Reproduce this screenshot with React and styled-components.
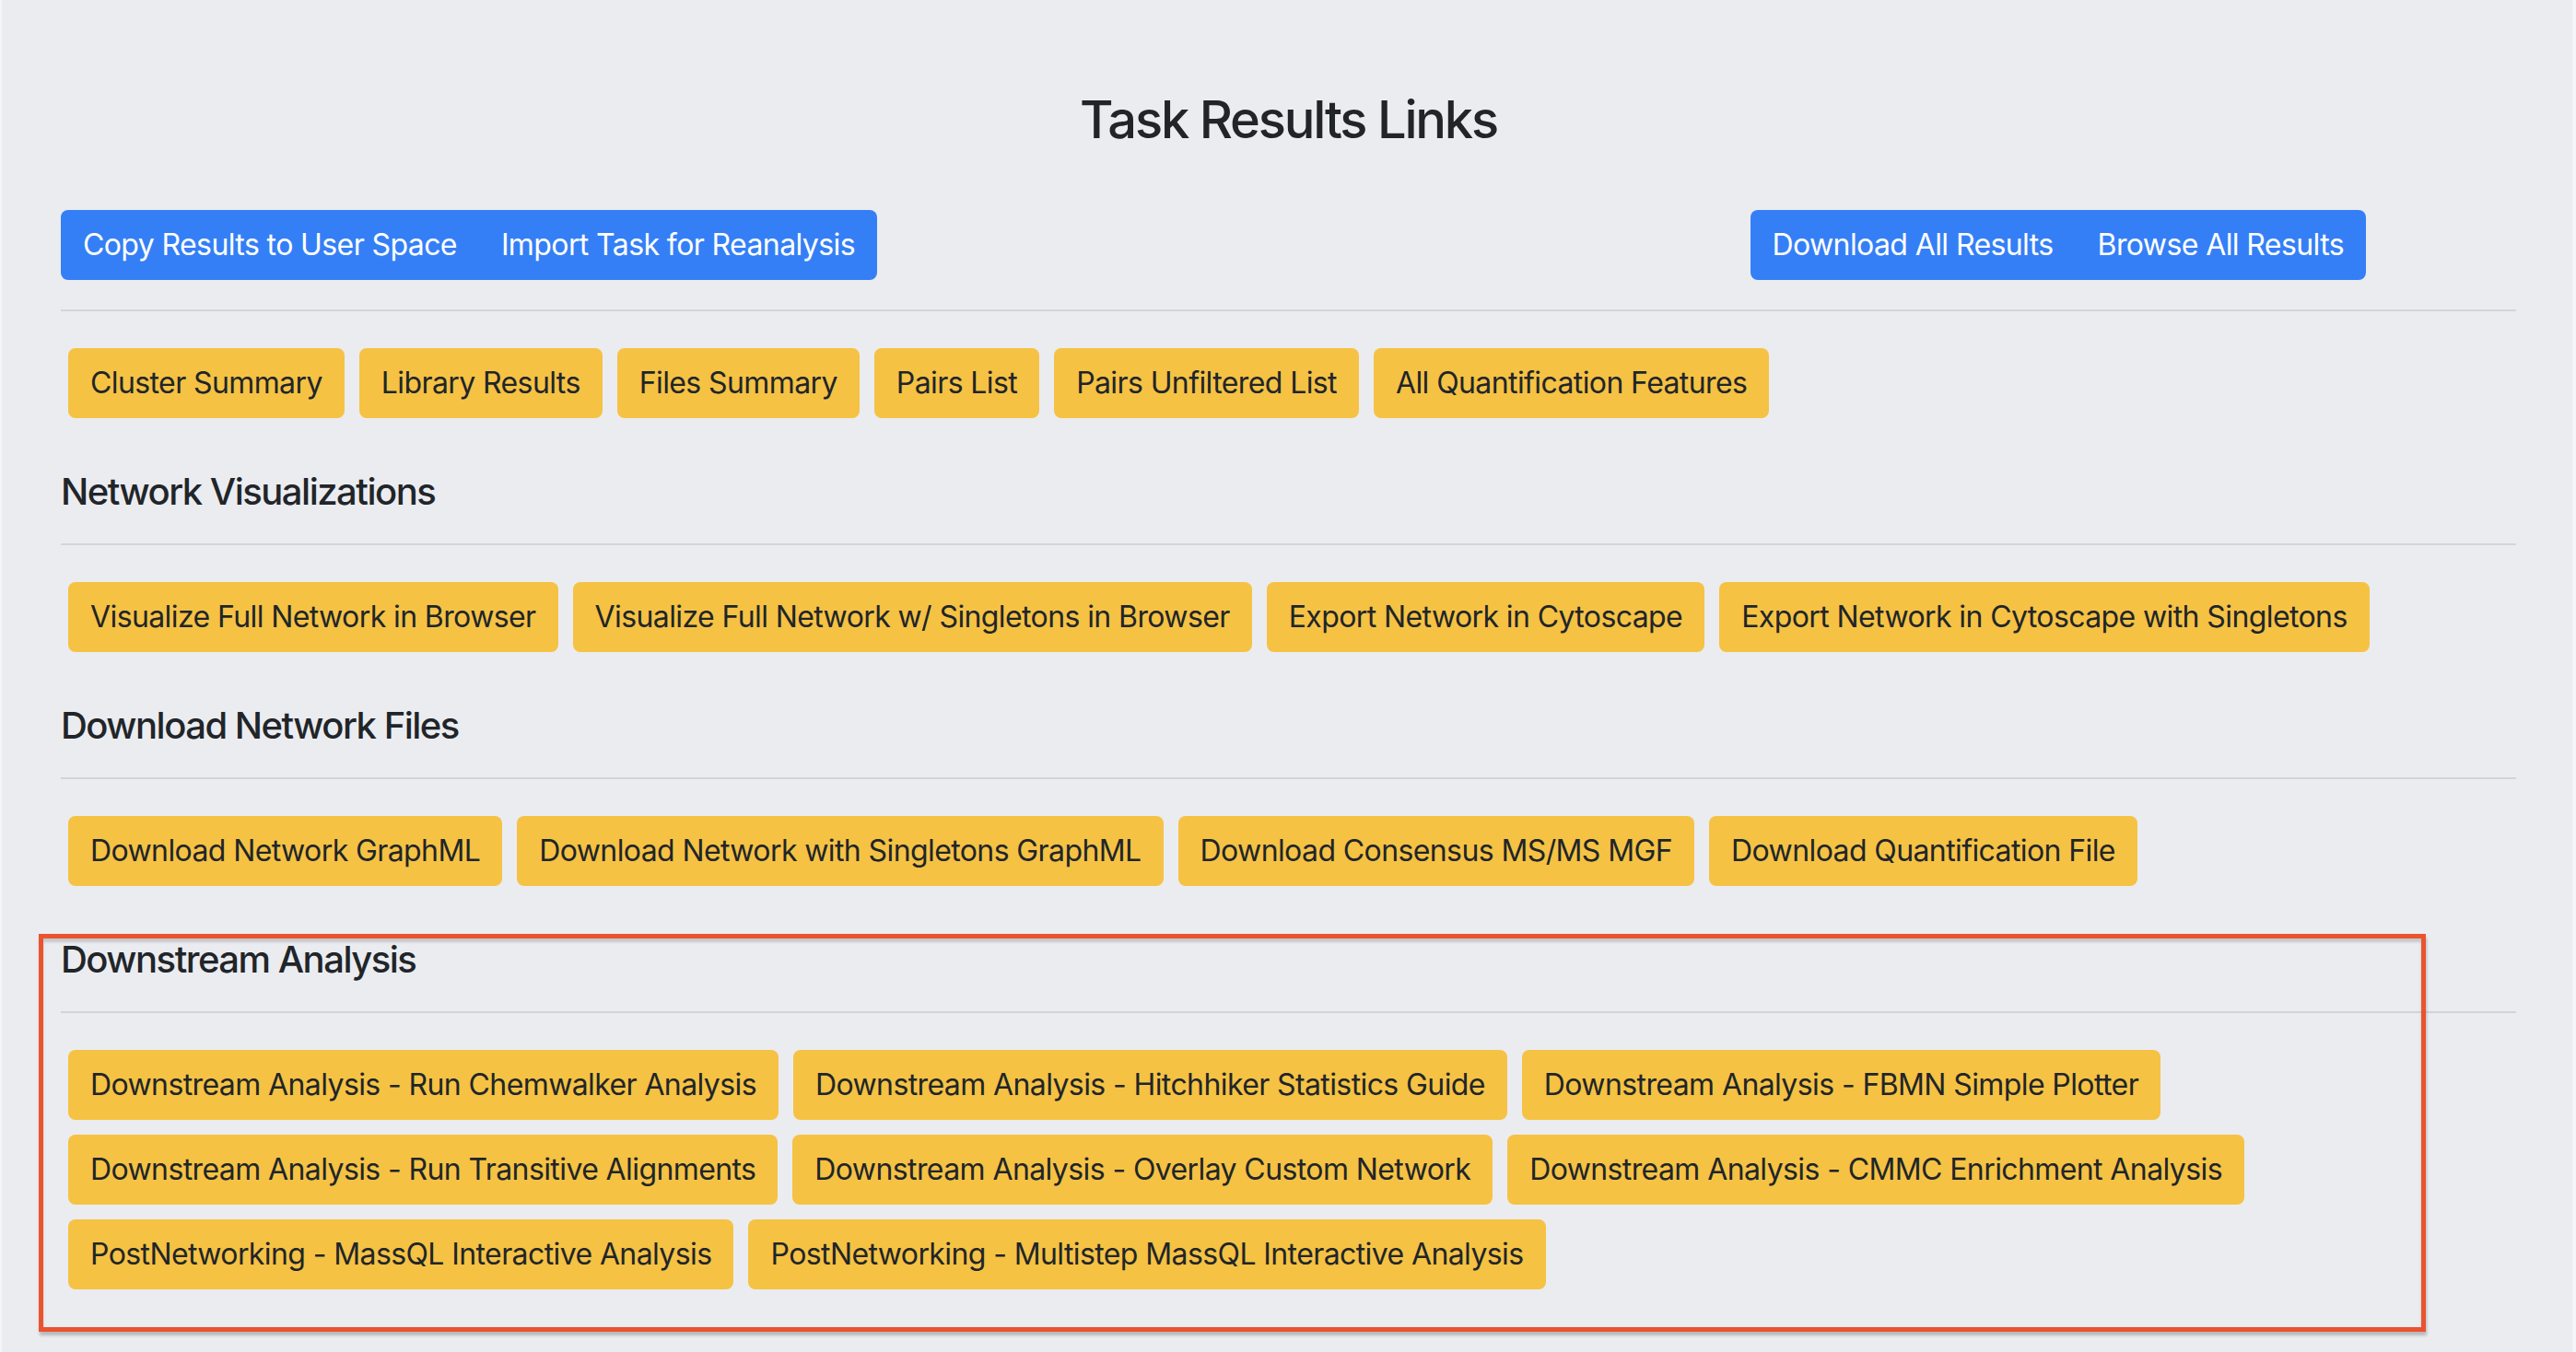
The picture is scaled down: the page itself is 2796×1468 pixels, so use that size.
import React from 'react'
import styled, { createGlobalStyle } from 'styled-components'

const GlobalStyle = createGlobalStyle`
  html, body {
    margin: 0;
    padding: 0;
    background: #f4f5f7;
  }
  body {
    font-family: Inter, "Noto Sans", "Liberation Sans", sans-serif;
    color: #212529;
  }
`

const quickLinks = [
  'Cluster Summary',
  'Library Results',
  'Files Summary',
  'Pairs List',
  'Pairs Unfiltered List',
  'All Quantification Features',
]

const sections = [
  {
    title: 'Network Visualizations',
    links: [
      'Visualize Full Network in Browser',
      'Visualize Full Network w/ Singletons in Browser',
      'Export Network in Cytoscape',
      'Export Network in Cytoscape with Singletons',
    ],
  },
  {
    title: 'Download Network Files',
    links: [
      'Download Network GraphML',
      'Download Network with Singletons GraphML',
      'Download Consensus MS/MS MGF',
      'Download Quantification File',
    ],
  },
  {
    title: 'Downstream Analysis',
    highlight: true,
    links: [
      'Downstream Analysis - Run Chemwalker Analysis',
      'Downstream Analysis - Hitchhiker Statistics Guide',
      'Downstream Analysis - FBMN Simple Plotter',
      'Downstream Analysis - Run Transitive Alignments',
      'Downstream Analysis - Overlay Custom Network',
      'Downstream Analysis - CMMC Enrichment Analysis',
      'PostNetworking - MassQL Interactive Analysis',
      'PostNetworking - Multistep MassQL Interactive Analysis',
    ],
  },
]

export default function App() {
  return (
    <>
      <GlobalStyle />
      <Page>
        <Title>Task Results Links</Title>
        <TopBar>
          <BtnGroup>
            <BlueButton>Copy Results to User Space</BlueButton>
            <BlueButton>Import Task for Reanalysis</BlueButton>
          </BtnGroup>
          <BtnGroup>
            <BlueButton>Download All Results</BlueButton>
            <BlueButton>Browse All Results</BlueButton>
          </BtnGroup>
        </TopBar>
        <Divider />
        <ButtonRow>
          {quickLinks.map((label) => (
            <YellowButton key={label}>{label}</YellowButton>
          ))}
        </ButtonRow>
        {sections.map((section) => (
          <Section key={section.title}>
            {section.highlight && <Highlight />}
            <SectionTitle>{section.title}</SectionTitle>
            <Divider />
            <ButtonRow>
              {section.links.map((label) => (
                <YellowButton key={label}>{label}</YellowButton>
              ))}
            </ButtonRow>
          </Section>
        ))}
      </Page>
    </>
  )
}

const Page = styled.div`
  background: #ebecf0;
  margin: 0 4px 0 2px;
  min-height: 1468px;
  box-sizing: border-box;
  padding: 97px 61px 0 64px;
`

const Title = styled.h3`
  margin: 0 0 64px;
  text-align: center;
  font-size: 56px;
  line-height: 1.2;
  font-weight: 500;
  letter-spacing: -2.2px;
  color: #212529;
`

const TopBar = styled.div`
  display: flex;
  justify-content: space-between;
  padding-right: 163px;
`

const BtnGroup = styled.div`
  display: inline-flex;
  border-radius: 8px;
  overflow: hidden;
`

const BaseButton = styled.button`
  font-family: inherit;
  font-size: 32px;
  line-height: 48px;
  font-weight: 400;
  letter-spacing: -0.6px;
  padding: 14px 24px;
  border: none;
  cursor: pointer;
  white-space: nowrap;
`

const BlueButton = styled(BaseButton)`
  background: #357ff6;
  color: #ffffff;
  border-radius: 0;
`

const YellowButton = styled(BaseButton)`
  background: #f5c244;
  color: #212529;
  border-radius: 8px;
  margin: 8px;
`

const Divider = styled.hr`
  border: 0;
  border-top: 2px solid #d3d4d8;
  margin: 32px 0;
`

const ButtonRow = styled.div`
  display: flex;
  flex-wrap: wrap;
`

const Section = styled.section`
  position: relative;
  margin-top: 48px;
`

const SectionTitle = styled.h5`
  margin: 0;
  font-size: 40px;
  line-height: 48px;
  font-weight: 500;
  letter-spacing: -1.5px;
  color: #212529;
`

const Highlight = styled.div`
  position: absolute;
  top: -4px;
  left: -24px;
  right: 98px;
  bottom: -38px;
  border: 5px solid #e9542f;
  box-shadow: 1px 4px 3px rgba(0, 0, 0, 0.22), inset 0 4px 3px rgba(0, 0, 0, 0.16);
  pointer-events: none;
`
